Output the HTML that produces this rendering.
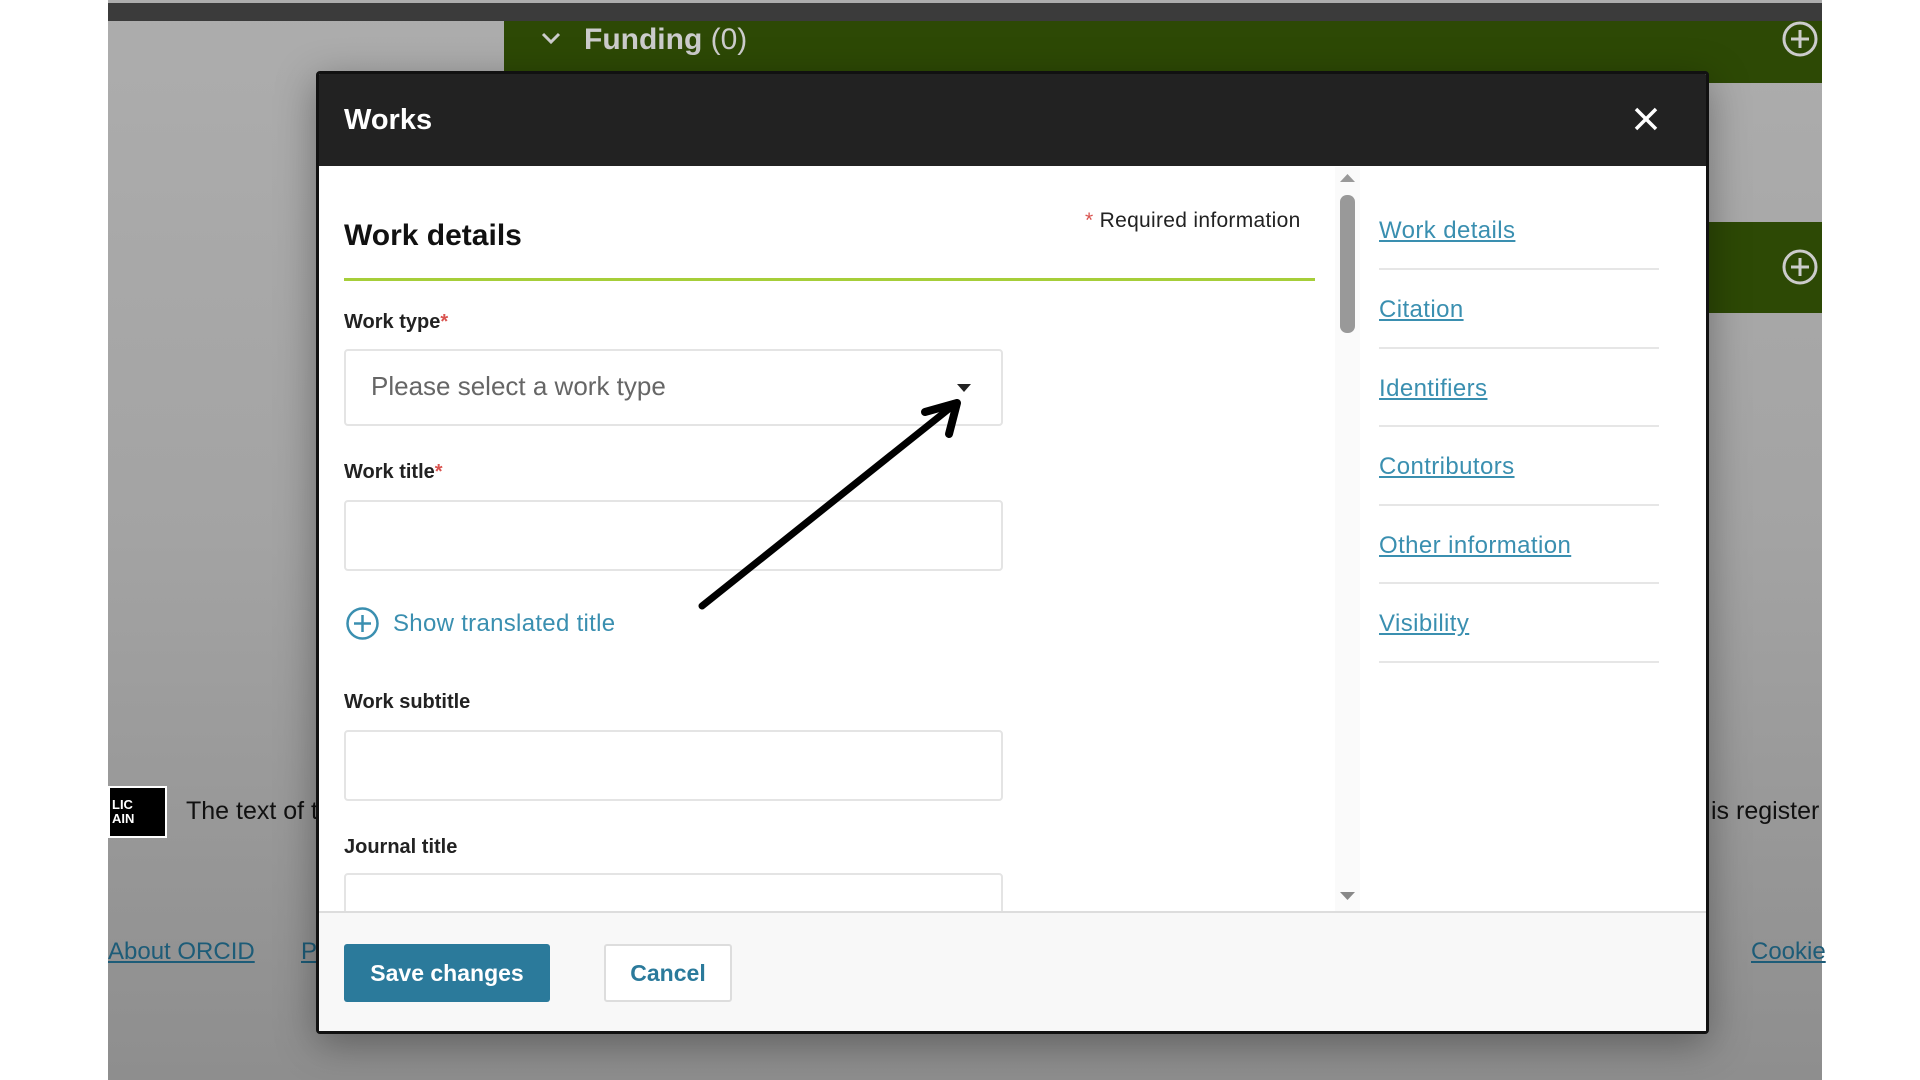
<!DOCTYPE html>
<html><head><meta charset="utf-8"><style>
*{margin:0;padding:0;box-sizing:border-box}
body{width:1920px;height:1080px;background:#fff;position:relative;overflow:hidden;font-family:"Liberation Sans",sans-serif}
.a{position:absolute}
.lbl{position:absolute;left:344px;font-weight:bold;font-size:20px;color:#222}
.lbl span{color:#d9534f}
.inp{position:absolute;left:344px;width:659px;background:#fff;border:2px solid #e4e4e4;border-radius:4px}
.nav{position:absolute;left:1379px;font-size:24px;color:#3a8fb0;text-decoration:underline;letter-spacing:0.4px}
.sep{position:absolute;left:1379px;width:280px;height:2px;background:#e6e6e6}
</style></head><body>
<div class="a" style="left:108px;top:0;width:1714px;height:1080px;background:linear-gradient(#adadad,#a3a3a3 50%,#8e8e8e)"></div>
<div class="a" style="left:108px;top:3px;width:1714px;height:18px;background:#3b3b3b"></div>
<div class="a" style="left:504px;top:21px;width:1318px;height:62px;background:#2d4905"></div>
<svg class="a" style="left:541px;top:31px" width="20" height="14"><path d="M2 3l8 8 8-8" fill="none" stroke="#ccc" stroke-width="3"/></svg>
<div class="a" style="left:584px;top:23px;font-size:30px;color:#ccc;font-weight:bold">Funding <span style="font-weight:normal">(0)</span></div>
<svg class="a" style="left:1780px;top:19px" width="40" height="40"><circle cx="20" cy="20" r="16" fill="none" stroke="#ccc" stroke-width="3"/><path d="M20 11v18M11 20h18" stroke="#ccc" stroke-width="3"/></svg>
<div class="a" style="left:1700px;top:222px;width:122px;height:91px;background:#2d4905"></div>
<svg class="a" style="left:1780px;top:247px" width="40" height="40"><circle cx="20" cy="20" r="16" fill="none" stroke="#ccc" stroke-width="3"/><path d="M20 11v18M11 20h18" stroke="#ccc" stroke-width="3"/></svg>
<div class="a" style="left:108px;top:786px;width:59px;height:52px;background:#000;border:2px solid #fff;color:#fff;font-size:13px;font-weight:bold;line-height:14px;padding:10px 0 0 2px">LIC<br>AIN</div>
<div class="a" style="left:186px;top:797px;font-size:25px;color:#111">The text of t</div>
<div class="a" style="left:1711px;top:797px;font-size:25px;color:#111">is register</div>
<div class="a" style="left:108px;top:938px;font-size:24px;color:#1d5c78;text-decoration:underline">About ORCID</div>
<div class="a" style="left:301px;top:938px;font-size:24px;color:#1d5c78;text-decoration:underline">P</div>
<div class="a" style="left:1751px;top:938px;font-size:24px;color:#1d5c78;text-decoration:underline">Cookie</div>

<div class="a" style="left:316px;top:71px;width:1393px;height:963px;background:#fff;border:3px solid #111;border-radius:4px;overflow:hidden;box-shadow:0 10px 40px rgba(0,0,0,.35)">
<div class="a" style="left:0;top:0;width:100%;height:92px;background:#222"></div>
</div>
<div class="a" style="left:344px;top:104px;font-size:29px;font-weight:bold;color:#fff">Works</div>
<svg class="a" style="left:1634px;top:107px" width="24" height="24"><path d="M2 2L22 22M22 2L2 22" stroke="#fff" stroke-width="3.5"/></svg>

<div class="a" style="left:344px;top:219px;font-size:30px;font-weight:bold;color:#111">Work details</div>
<div class="a" style="left:1085px;top:209px;font-size:21px;color:#222;letter-spacing:0.3px"><span style="color:#d9534f">*</span> Required information</div>
<div class="a" style="left:344px;top:278px;width:971px;height:3px;background:#a6ce39"></div>

<div class="lbl" style="top:311px">Work type<span>*</span></div>
<div class="inp" style="top:349px;height:77px"></div>
<div class="a" style="left:371px;top:371px;font-size:26px;color:#666">Please select a work type</div>
<svg class="a" style="left:957px;top:384px" width="14" height="9"><path d="M0 0h14L7 8z" fill="#222"/></svg>
<div class="lbl" style="top:461px">Work title<span>*</span></div>
<div class="inp" style="top:500px;height:71px"></div>
<svg class="a" style="left:345px;top:606px" width="35" height="35"><circle cx="17.5" cy="17.5" r="15" fill="none" stroke="#3a8fb0" stroke-width="2.5"/><path d="M17.5 9v17M9 17.5h17" stroke="#3a8fb0" stroke-width="2.5"/></svg>
<div class="a" style="left:393px;top:610px;font-size:24px;color:#3a8fb0;letter-spacing:0.3px">Show translated title</div>
<div class="lbl" style="top:691px">Work subtitle</div>
<div class="inp" style="top:730px;height:71px"></div>
<div class="lbl" style="top:836px">Journal title</div>
<div class="inp" style="top:873px;height:60px"></div>

<div class="a" style="left:1335px;top:167px;width:25px;height:745px;background:#fafafa"></div>
<svg class="a" style="left:1340px;top:173px" width="15" height="10"><path d="M0 9h15L7.5 1z" fill="#999"/></svg>
<div class="a" style="left:1340px;top:195px;width:15px;height:138px;background:#999;border-radius:7px"></div>
<svg class="a" style="left:1340px;top:891px" width="15" height="10"><path d="M0 1h15L7.5 9z" fill="#888"/></svg>

<div class="nav" style="top:217px">Work details</div>
<div class="sep" style="top:268px"></div>
<div class="nav" style="top:296px">Citation</div>
<div class="sep" style="top:347px"></div>
<div class="nav" style="top:375px">Identifiers</div>
<div class="sep" style="top:425px"></div>
<div class="nav" style="top:453px">Contributors</div>
<div class="sep" style="top:504px"></div>
<div class="nav" style="top:532px">Other information</div>
<div class="sep" style="top:582px"></div>
<div class="nav" style="top:610px">Visibility</div>
<div class="sep" style="top:661px"></div>

<div class="a" style="left:319px;top:911px;width:1387px;height:120px;background:#f8f8f8;border-top:2px solid #ddd"></div>
<div class="a" style="left:344px;top:944px;width:206px;height:58px;background:#2b7a9b;border-radius:3px;color:#fff;font-weight:bold;font-size:23px;text-align:center;line-height:58px">Save changes</div>
<div class="a" style="left:604px;top:944px;width:128px;height:58px;background:#fff;border:2px solid #ddd;border-radius:3px;color:#2b7a9b;font-weight:bold;font-size:23px;text-align:center;line-height:54px">Cancel</div>

<svg class="a" style="left:0;top:0" width="1920" height="1080"><path d="M702 606L950 408" stroke="#000" stroke-width="7" stroke-linecap="round"/><path d="M957 403L925 412M957 403L949 434" stroke="#000" stroke-width="8" stroke-linecap="round"/></svg>
</body></html>
